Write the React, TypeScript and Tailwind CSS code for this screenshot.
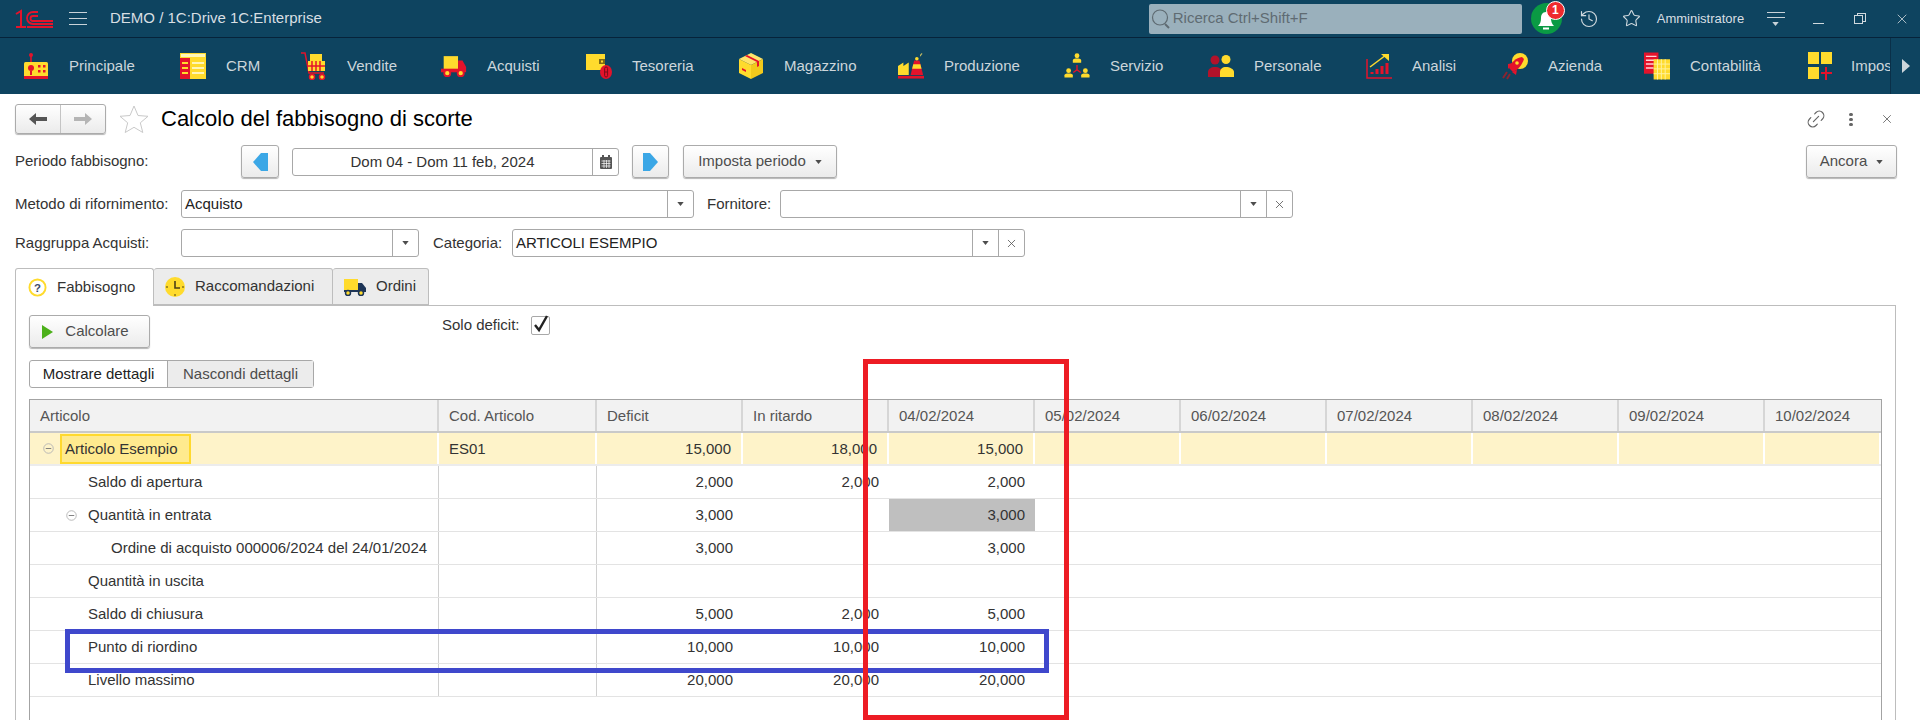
import type { ReactNode } from "react";
import { ChevronDown, History, Link2, Star, X } from "lucide-react";

const Y = "#ffdb2d";
const R = "#e4132b";

const IconPrincipale = () => (
  <svg viewBox="0 0 26 28" className="w-[26px] h-[28px]">
    <circle cx="8" cy="3" r="2" fill={R} />
    <rect x="7.2" y="4" width="1.6" height="7" fill={R} />
    <rect x="1" y="10" width="24" height="17" rx="1.5" fill={Y} />
    <rect x="1" y="24" width="24" height="3" fill={R} />
    <circle cx="8" cy="16" r="3" fill={R} />
    <rect x="7" y="19" width="2" height="4" fill={R} />
    <rect x="15" y="13" width="2.5" height="2.5" fill={R} />
    <rect x="20" y="13" width="2.5" height="2.5" fill={R} />
    <rect x="15" y="18" width="2.5" height="2.5" fill={R} />
    <rect x="20" y="18" width="2.5" height="2.5" fill={R} />
  </svg>
);

const IconCrm = () => (
  <svg viewBox="0 0 26 26" className="w-[26px] h-[26px]">
    <rect x="0" y="0" width="26" height="26" fill={Y} />
    <rect x="1" y="1" width="24" height="3" fill="#fff6b8" />
    <rect x="0" y="5" width="10" height="21" fill={R} />
    <rect x="2" y="9" width="6" height="2" fill={Y} />
    <rect x="2" y="14" width="6" height="2" fill={Y} />
    <rect x="2" y="19" width="6" height="2" fill={Y} />
    <rect x="12" y="9" width="12" height="2" fill="#fff6b8" />
    <rect x="12" y="14" width="12" height="2" fill="#fff6b8" />
    <rect x="12" y="19" width="12" height="2" fill="#fff6b8" />
  </svg>
);

const IconCart = () => (
  <svg viewBox="0 0 26 28" className="w-[26px] h-[28px]">
    <path d="M0 1h4l4 20h15" fill="none" stroke={R} strokeWidth="1.5" />
    <rect x="9" y="2" width="12" height="7" fill={Y} />
    <rect x="7" y="9" width="17" height="10" fill={Y} />
    <path d="M11 9v10M15 9v10M19 9v10M7 14h17" stroke={R} strokeWidth="1.5" />
    <circle cx="11" cy="25" r="2.5" fill={Y} stroke={R} strokeWidth="1.5" />
    <circle cx="21" cy="25" r="2.5" fill={Y} stroke={R} strokeWidth="1.5" />
  </svg>
);

const IconTruck = () => (
  <svg viewBox="0 0 29 24" className="w-[29px] h-[24px]">
    <rect x="3" y="1" width="16" height="15" fill={Y} />
    <path d="M19 6h5l4 7v6H19z" fill={R} />
    <rect x="0" y="15" width="20" height="4" fill={R} />
    <circle cx="7" cy="20" r="3.4" fill={Y} stroke={R} strokeWidth="2" />
    <circle cx="22" cy="20" r="3.4" fill={Y} stroke={R} strokeWidth="2" />
  </svg>
);

const IconWallet = () => (
  <svg viewBox="0 0 26 26" className="w-[26px] h-[26px]">
    <path d="M0 1h19v16H0z" fill={Y} />
    <rect x="13" y="6" width="6" height="5" fill="#7d6a14" />
    <rect x="15" y="7.5" width="2" height="2" fill={Y} />
    <ellipse cx="20" cy="19" rx="6" ry="7" fill={R} />
    <rect x="18.6" y="14" width="3" height="10" rx="1.5" fill="none" stroke="#7a0e1a" strokeWidth="1" />
    <path d="M18.6 19h3" stroke="#7a0e1a" />
  </svg>
);

const IconBox = () => (
  <svg viewBox="0 0 25 26" className="w-[25px] h-[26px]">
    <path d="M12 0l12 6-12 6L0 6z" fill="#ffe46b" />
    <path d="M0 6l12 6v14L0 20z" fill={Y} />
    <path d="M24 6v14l-12 6V12z" fill="#f2c91c" />
    <path d="M6 3l12 6v5l2-1V8L8 2z" fill={R} />
    <path d="M3 15l4 2v2l-4-2z" fill={R} />
  </svg>
);

const IconFactory = () => (
  <svg viewBox="0 0 29 28" className="w-[29px] h-[28px]">
    <path d="M0 14l6-4v4l6-4v14H0z" fill={Y} />
    <path d="M18 8h6l4 16H14z" fill={R} />
    <path d="M17 12h8l1.2 5H15.8z" fill={Y} />
    <circle cx="21" cy="6" r="2" fill={Y} />
    <path d="M25 3c0-1.500 1-2.500 2-3" stroke="#c7bd63" strokeWidth="1.200" fill="none" />
    <rect x="0" y="25" width="29" height="3" fill={R} />
  </svg>
);

const Person = ({ x, y, c = Y }: { x: number; y: number; c?: string }) => (
  <g fill={c}>
    <circle cx={x} cy={y} r="2.600" />
    <path d={`M${x - 4.500} ${y + 7.500}v-2.500c0-1.500 1.500-2 4.500-2s4.500.5 4.500 2v2.500z`} />
  </g>
);

const IconService = () => (
  <svg viewBox="0 0 28 28" className="w-[28px] h-[28px]">
    <Person x={14} y={3} />
    <Person x={5} y={19} />
    <Person x={23} y={19} />
    <path d="M14 13v5M14 18l-4 3M14 18l4 3" stroke={R} strokeWidth="1.500" fill="none" />
  </svg>
);

const IconPeople = () => (
  <svg viewBox="0 0 26 24" className="w-[26px] h-[24px]">
    <circle cx="7" cy="6" r="4.500" fill="#b3122a" />
    <path d="M0 23v-5c0-3 3-5 7-5s7 2 7 5v5z" fill="#b3122a" />
    <circle cx="18" cy="5.500" r="4.500" fill={Y} />
    <path d="M12 23v-5c0-3 2.500-5 6-5s8 2 8 5v5z" fill={Y} />
  </svg>
);

const IconChart = () => (
  <svg viewBox="0 0 26 28" className="w-[26px] h-[28px]">
    <path d="M1 7v19h25" fill="none" stroke={R} strokeWidth="1.500" />
    <path d="M6 22V20M11 22V17M16 22V14M21 22V11" stroke={R} strokeWidth="3" />
    <path d="M4 15L20 3" stroke={Y} strokeWidth="1.500" />
    <path d="M15 2h8v7z" fill={Y} />
  </svg>
);

const IconRocket = () => (
  <svg viewBox="0 0 26 28" className="w-[26px] h-[28px]">
    <circle cx="18" cy="9" r="8" fill={Y} />
    <path d="M20 5c-6 1-11 5-13 11l4 4c5-2 9-7 11-13z" fill={R} />
    <path d="M6 12l5-1-5 6zM15 18l-1 5-4-3z" fill={R} />
    <path d="M5 20l-4 6M8 22l-3 5" stroke="#8c2430" strokeWidth="2" />
    <circle cx="15" cy="11" r="1.800" fill={Y} />
  </svg>
);

const IconBooks = () => (
  <svg viewBox="0 0 27 28" className="w-[27px] h-[28px]">
    <rect x="0" y="0" width="15" height="22" fill={R} />
    <path d="M2 4h11M2 8h11M2 12h8M2 16h8" stroke="#ffd1d6" strokeWidth="1.500" />
    <rect x="10" y="7" width="17" height="21" fill={Y} />
    <path d="M14 7v21M18 7v21M22 7v21M10 12h17M10 17h17M10 22h17" stroke="#fff2a0" strokeWidth="1" />
  </svg>
);

const IconGrid = () => (
  <svg viewBox="0 0 24 28" className="w-[24px] h-[28px]">
    <rect x="0" y="0" width="11" height="12" fill={Y} />
    <rect x="13" y="0" width="11" height="12" fill={Y} />
    <rect x="0" y="15" width="11" height="12" fill={Y} />
    <path d="M18 15v13M13 21h11" stroke={R} strokeWidth="2" />
  </svg>
);

const navItems: { label: string; icon: ReactNode; w: string }[] = [
  { label: "Principale", icon: <IconPrincipale />, w: "w-[157px]" },
  { label: "CRM", icon: <IconCrm />, w: "w-[121px]" },
  { label: "Vendite", icon: <IconCart />, w: "w-[140px]" },
  { label: "Acquisti", icon: <IconTruck />, w: "w-[145px]" },
  { label: "Tesoreria", icon: <IconWallet />, w: "w-[152px]" },
  { label: "Magazzino", icon: <IconBox />, w: "w-[160px]" },
  { label: "Produzione", icon: <IconFactory />, w: "w-[166px]" },
  { label: "Servizio", icon: <IconService />, w: "w-[144px]" },
  { label: "Personale", icon: <IconPeople />, w: "w-[158px]" },
  { label: "Analisi", icon: <IconChart />, w: "w-[136px]" },
  { label: "Azienda", icon: <IconRocket />, w: "w-[142px]" },
  { label: "Contabilità", icon: <IconBooks />, w: "w-[164px]" },
];

const btn =
  "flex items-center justify-center rounded-[3px] border border-[#ababab] bg-linear-to-b from-white to-[#ebebeb] shadow-[0_1px_1px_#b5b5b5] text-[#4d4d4d]";

const Caret = () => (
  <svg viewBox="0 0 8 5" className="w-[7px] h-[4px]">
    <path d="M0 0h8L4 5z" fill="#4d4d4d" />
  </svg>
);

const FieldEnd = ({ children }: { children: ReactNode }) => (
  <div className="w-[26px] h-full flex items-center justify-center border-l border-[#a8a8a8]">{children}</div>
);

const Field = ({ value, w, clear }: { value?: string; w: string; clear?: boolean }) => (
  <div className={`${w} h-[28px] flex rounded-[3px] border border-[#a8a8a8] bg-white text-black`}>
    <div className="flex-1 pl-[3px] leading-[25px] truncate text-[#222]">{value}</div>
    <FieldEnd>
      <Caret />
    </FieldEnd>
    {clear && (
      <FieldEnd>
        <X className="w-[13px] h-[13px] text-[#555]" strokeWidth={1.5} />
      </FieldEnd>
    )}
  </div>
);

const Collapse = ({ className }: { className: string }) => (
  <svg viewBox="0 0 12 12" className={`w-[11px] h-[11px] shrink-0 ${className}`}>
    <circle cx="6" cy="6" r="5.200" fill="none" stroke="#b5b5b5" />
    <path d="M3 6h6" stroke="#777" />
  </svg>
);

const columns = [
  "Articolo",
  "Cod. Articolo",
  "Deficit",
  "In ritardo",
  "04/02/2024",
  "05/02/2024",
  "06/02/2024",
  "07/02/2024",
  "08/02/2024",
  "09/02/2024",
  "10/02/2024",
];

const rows: { label: string; pad: string; vals: string[]; collapse?: string }[] = [
  { label: "Saldo di apertura", pad: "pl-[58px]", vals: ["2,000", "2,000", "2,000"] },
  { label: "Quantità in entrata", pad: "pl-[58px]", vals: ["3,000", "", "3,000"], collapse: "left-[36px]" },
  { label: "Ordine di acquisto 000006/2024 del 24/01/2024", pad: "pl-[81px]", vals: ["3,000", "", "3,000"] },
  { label: "Quantità in uscita", pad: "pl-[58px]", vals: ["", "", ""] },
  { label: "Saldo di chiusura", pad: "pl-[58px]", vals: ["5,000", "2,000", "5,000"] },
  { label: "Punto di riordino", pad: "pl-[58px]", vals: ["10,000", "10,000", "10,000"] },
  { label: "Livello massimo", pad: "pl-[58px]", vals: ["20,000", "20,000", "20,000"] },
];

const gridCols =
  "grid grid-cols-[409px_158px_146px_146px_146px_146px_146px_146px_146px_146px_1fr]";

const App = () => {
  return (
    <div className="relative w-[1920px] h-[720px] overflow-hidden flex flex-col bg-white text-[15px] text-[#333] font-['Liberation_Sans',Arial,sans-serif]">
      {/* Top bar */}
      <div className="h-[38px] shrink-0 flex items-center bg-[#0e4460] border-b border-[#06233a] text-[#d8dfe3]">
        <svg viewBox="0 0 38 20" className="ml-[15px] w-[38px] h-[20px]">
          <path d="M1 5l5-3v16M1 18h10" fill="none" stroke="#e4132b" strokeWidth="2" />
          <path d="M23 3h-5a6 6 0 0 0 0 12h20M23 7h-5a2.500 2.500 0 0 0 0 5h20M12 18h26" fill="none" stroke="#e4132b" strokeWidth="1.800" />
        </svg>
        <div className="ml-[16px] w-[18px] flex flex-col gap-[5px]">
          <div className="h-px bg-[#c9d3d9]" />
          <div className="h-px bg-[#c9d3d9]" />
          <div className="h-px bg-[#c9d3d9]" />
        </div>
        <div className="ml-[23px] text-[15px]">DEMO / 1C:Drive 1C:Enterprise</div>
        <div className="ml-[827px] w-[373px] h-[30px] flex items-center gap-[2px] rounded-[2px] bg-[#9ab0bc] pl-[2px] text-[#5f6b72]">
          <svg viewBox="0 0 20 22" className="w-[20px] h-[22px]">
            <circle cx="9" cy="9.500" r="7.500" fill="none" stroke="#5f6b72" strokeWidth="1.200" />
            <path d="M14 16l4 4" stroke="#5f6b72" strokeWidth="2" />
          </svg>
          Ricerca Ctrl+Shift+F
        </div>
        <div className="relative ml-[9px] w-[31px] h-[31px] rounded-[50%] bg-[#0a9a44] flex items-center justify-center">
          <svg viewBox="0 0 18 20" className="w-[18px] h-[20px] mt-[4px]">
            <path d="M9 1c3.500 0 5 3 5 6 0 4 1 6 3 8H1c2-2 3-4 3-8 0-3 1.500-6 5-6z" fill="#fff" />
            <rect x="6" y="16.500" width="6" height="2" fill="#fff" />
          </svg>
          <div className="absolute -top-[2px] left-[15px] w-[19px] h-[19px] rounded-full bg-[#ee2a2e] border border-white text-white text-[12px] font-bold leading-[17px] text-center">1</div>
        </div>
        <History className="ml-[17px] w-[20px] h-[20px] text-[#d0d9de]" strokeWidth={1.4} />
        <Star className="ml-[23px] w-[19px] h-[19px] text-[#d0d9de]" strokeWidth={1.4} />
        <div className="ml-[16px] w-[110px] text-[13px]">Amministratore</div>
        <div className="w-[18px] flex flex-col items-center gap-[4px]">
          <div className="h-px w-full bg-[#c9d3d9]" />
          <div className="h-px w-full bg-[#c9d3d9]" />
          <svg viewBox="0 0 8 5" className="w-[7px] h-[4px]">
            <path d="M0 0h8L4 5z" fill="#c9d3d9" />
          </svg>
        </div>
        <div className="ml-[28px] w-[11px] h-px mt-[10px] bg-[#d0d9de]" />
        <div className="relative ml-[30px] w-[12px] h-[11px]">
          <div className="absolute left-[3px] top-0 w-[9px] h-[9px] border border-[#d0d9de]" />
          <div className="absolute left-0 top-[2px] w-[9px] h-[9px] border border-[#d0d9de] bg-[#0e4460]" />
        </div>
        <X className="ml-[28px] w-[16px] h-[16px] text-[#d0d9de]" strokeWidth={1.2} />
      </div>

      {/* Sections */}
      <div className="h-[56px] shrink-0 flex items-center bg-[#0e4460] text-[#ccd6db] text-[15px]">
        <div className="w-[1890px] h-full flex items-center pl-[23px] overflow-hidden">
          {navItems.map((item) => (
            <div key={item.label} className={`${item.w} shrink-0 flex items-center`}>
              <div className="w-[26px] flex justify-center">{item.icon}</div>
              <span className="ml-[20px]">{item.label}</span>
            </div>
          ))}
          <div className="shrink-0 flex items-center">
            <div className="w-[24px]">
              <IconGrid />
            </div>
            <span className="ml-[19px]">Imposta</span>
          </div>
        </div>
        <div className="w-[30px] h-full border-l border-[#0a3049] flex items-center justify-center">
          <svg viewBox="0 0 8 14" className="w-[8px] h-[14px]">
            <path d="M0 0l8 7-8 7z" fill="#cdd6db" />
          </svg>
        </div>
      </div>

      {/* Form */}
      <div className="flex-1 flex flex-col min-h-0">
        <div className="mt-[10px] h-[30px] flex items-center pl-[15px]">
          <div className={`${btn} w-[91px] h-[30px]`}>
            <div className="flex-1 h-full flex items-center justify-center border-r border-[#c4c4c4]">
              <svg viewBox="0 0 18 12" className="w-[18px] h-[12px]">
                <path d="M0 6l7-6v4h11v4H7v4z" fill="#555" />
              </svg>
            </div>
            <div className="flex-1 h-full flex items-center justify-center">
              <svg viewBox="0 0 18 12" className="w-[18px] h-[12px]">
                <path d="M18 6l-7-6v4H0v4h11v4z" fill="#b5b5b5" />
              </svg>
            </div>
          </div>
          <svg viewBox="0 0 30 28" className="ml-[13px] w-[30px] h-[28px]">
            <path d="M15 1l4 9.500 10 .8-7.700 6.500 2.500 9.700L15 22.300 6.200 27.500l2.500-9.700L1 11.300l10-.8z" fill="#fff" stroke="#c9c9c9" />
          </svg>
          <div className="ml-[12px] text-[22px] text-black leading-none">Calcolo del fabbisogno di scorte</div>
          <div className="ml-auto flex items-center pr-[26px]">
            <Link2 className="w-[22px] h-[22px] -rotate-45 text-[#666]" strokeWidth={1.3} />
            <div className="ml-[22px] flex flex-col gap-[2px]">
              <div className="w-[4px] h-[3px] rounded-full bg-[#666]" />
              <div className="w-[4px] h-[3px] rounded-full bg-[#666]" />
              <div className="w-[4px] h-[3px] rounded-full bg-[#666]" />
            </div>
            <X className="ml-[27px] w-[14px] h-[14px] text-[#666]" strokeWidth={1.5} />
          </div>
        </div>

        <div className="mt-[11px] h-[33px] flex items-center pl-[15px] pr-[23px]">
          <div className="w-[226px]">Periodo fabbisogno:</div>
          <div className={`${btn} w-[38px] h-[33px]`}>
            <svg viewBox="0 0 15 18" className="w-[15px] h-[18px]">
              <path d="M0 9l8-9h7v18H8z" fill="#3ba7e6" />
            </svg>
          </div>
          <div className="ml-[13px] w-[327px] h-[28px] flex rounded-[3px] border border-[#a8a8a8]">
            <div className="flex-1 text-center leading-[26px]">Dom 04 - Dom 11 feb, 2024</div>
            <div className="w-[26px] h-full flex items-center justify-center border-l border-[#a8a8a8]">
              <svg viewBox="0 0 12 14" className="w-[12px] h-[14px]">
                <rect x="0" y="2" width="12" height="12" rx="1" fill="#555" />
                <rect x="2" y="0" width="2" height="3" fill="#555" />
                <rect x="8" y="0" width="2" height="3" fill="#555" />
                <path d="M1.500 6h9M1.500 8.500h9M1.500 11h9M4 5v8M6.500 5v8M9 5v8" stroke="#fff" strokeWidth=".7" />
              </svg>
            </div>
          </div>
          <div className={`${btn} ml-[13px] w-[37px] h-[33px]`}>
            <svg viewBox="0 0 15 18" className="w-[15px] h-[18px]">
              <path d="M15 9L7 0H0v18h7z" fill="#3ba7e6" />
            </svg>
          </div>
          <div className={`${btn} ml-[14px] w-[154px] h-[33px] gap-[9px]`}>
            Imposta periodo
            <Caret />
          </div>
          <div className={`${btn} ml-auto w-[91px] h-[33px] gap-[9px]`}>
            Ancora
            <Caret />
          </div>
        </div>

        <div className="mt-[12px] h-[28px] flex items-center pl-[15px]">
          <div className="w-[166px]">Metodo di rifornimento:</div>
          <Field value="Acquisto" w="w-[513px]" />
          <div className="ml-[13px] w-[73px]">Fornitore:</div>
          <Field w="w-[513px]" clear />
        </div>

        <div className="mt-[11px] h-[28px] flex items-center pl-[15px]">
          <div className="w-[166px]">Raggruppa Acquisti:</div>
          <Field w="w-[238px]" />
          <div className="ml-[14px] w-[79px]">Categoria:</div>
          <Field value="ARTICOLI ESEMPIO" w="w-[513px]" clear />
        </div>

        {/* Tabs */}
        <div className="relative z-10 mt-[11px] -mb-px h-[38px] flex pl-[15px]">
          <div className="w-[139px] h-[38px] flex items-center pl-[12px] gap-[10px] bg-white border border-b-0 border-[#bdbdbd] rounded-t-[3px]">
            <svg viewBox="0 0 20 20" className="w-[19px] h-[19px]">
              <circle cx="10" cy="10" r="8.500" fill="#fff" stroke="#ffdb2d" strokeWidth="2" />
              <text x="10" y="14.500" textAnchor="middle" fontSize="12" fontWeight="700" fill="#3c4a66">?</text>
            </svg>
            Fabbisogno
          </div>
          <div className="w-[179px] h-[37px] flex items-center pl-[11px] gap-[10px] bg-[#ececec] border border-l-0 border-[#bdbdbd] rounded-t-[3px]">
            <svg viewBox="0 0 20 20" className="w-[20px] h-[20px]">
              <circle cx="10" cy="10" r="10" fill="#ffdb2d" />
              <path d="M10 4v7h5" fill="none" stroke="#4d4016" strokeWidth="1.600" />
              <path d="M1 10h2M17 10h2M10 17v2" stroke="#4d4016" />
            </svg>
            Raccomandazioni
          </div>
          <div className="w-[96px] h-[37px] flex items-center pl-[11px] gap-[10px] bg-[#ececec] border border-l-0 border-[#bdbdbd] rounded-t-[3px]">
            <svg viewBox="0 0 22 18" className="w-[22px] h-[18px]">
              <rect x="0" y="1" width="14" height="12" fill="#ffdb2d" />
              <path d="M14 5h4l4 5v4H14z" fill="#1d3557" />
              <rect x="0" y="12" width="22" height="2" fill="#1d3557" />
              <circle cx="4" cy="15" r="2.500" fill="#ffdb2d" stroke="#1d3557" strokeWidth="1.500" />
              <circle cx="17" cy="15" r="2.500" fill="#ffdb2d" stroke="#1d3557" strokeWidth="1.500" />
            </svg>
            Ordini
          </div>
        </div>

        <div className="ml-[15px] w-[1881px] flex-1 min-h-0 flex flex-col border border-b-0 border-[#bdbdbd] pl-[13px] pt-[9px]">
          <div className="h-[33px] shrink-0 flex items-start">
            <div className={`${btn} w-[121px] h-[33px] gap-[12px] pr-[8px]`}>
              <svg viewBox="0 0 11 14" className="w-[11px] h-[14px]">
                <path d="M0 0l11 7-11 7z" fill="#4cb01a" />
              </svg>
              Calcolare
            </div>
            <div className="ml-[292px] mt-[1px] w-[89px] leading-[18px]">Solo deficit:</div>
            <div className="mt-[1px] w-[19px] h-[19px] rounded-[2px] border border-[#a8a8a8] flex items-center justify-center">
              <svg viewBox="0 0 16 18" className="w-[16px] h-[18px] -mt-[3px]">
                <path d="M2 10l4 5L14 1" fill="none" stroke="#222" strokeWidth="2.400" />
              </svg>
            </div>
          </div>

          <div className="mt-[12px] w-[285px] h-[28px] shrink-0 flex rounded-[3px] border border-[#a8a8a8]">
            <div className="w-[138px] flex items-center justify-center text-[#222] border-r border-[#a8a8a8]">Mostrare dettagli</div>
            <div className="flex-1 flex items-center justify-center bg-[#ececec] text-[#4d4d4d]">Nascondi dettagli</div>
          </div>

          {/* Grid */}
          <div className="mt-[11px] w-[1853px] flex-1 border border-b-0 border-[#a3a3a3]">
            <div className={`${gridCols} h-[33px] bg-[#f2f2f2] border-b-2 border-[#c9c9c9] text-[#555]`}>
              {columns.map((c) => (
                <div key={c} className="pl-[10px] leading-[31px] border-r-2 border-[#d6d6d6] last:border-r-0 truncate">
                  {c}
                </div>
              ))}
            </div>

            <div className={`${gridCols} h-[33px] bg-[#fef3c9] border-b-2 border-[#ececec]`}>
              <div className="relative border-r-2 border-white">
                <Collapse className="absolute left-[13px] top-[10px]" />
                <div className="absolute left-[30px] top-[1px] h-[30px] w-[131px] border-2 border-[#ffd92e] bg-[#ffea8e] pl-[3px] leading-[26px] text-[#333]">
                  Articolo Esempio
                </div>
              </div>
              <div className="pl-[10px] leading-[31px] border-r-2 border-white">ES01</div>
              <div className="pr-[10px] leading-[31px] text-right border-r-2 border-white">15,000</div>
              <div className="pr-[10px] leading-[31px] text-right border-r-2 border-white">18,000</div>
              <div className="pr-[10px] leading-[31px] text-right border-r-2 border-white">15,000</div>
              {[0, 1, 2, 3, 4, 5, 6].map((i) => (
                <div key={i} className="border-r-2 border-white last:border-r-0" />
              ))}
            </div>

            {rows.map((row) => (
              <div key={row.label} className={`${gridCols} h-[33px] border-b border-[#e3e3e3]`}>
                <div className={`relative ${row.pad} pr-[10px] leading-[32px] border-r border-[#d0d0d0] truncate`}>
                  {row.label === "Quantità in entrata" && <Collapse className="absolute left-[36px] top-[11px]" />}
                  {row.label}
                </div>
                <div className="border-r border-[#d0d0d0]" />
                <div className="pr-[10px] leading-[32px] text-right">{row.vals[0]}</div>
                <div className="pr-[10px] leading-[32px] text-right">{row.vals[1]}</div>
                <div className={`pr-[10px] leading-[32px] text-right ${row.label === "Quantità in entrata" ? "bg-[#bfbfbf]" : ""}`}>
                  {row.vals[2]}
                </div>
              </div>
            ))}
          </div>
        </div>
      </div>

      {/* Annotations drawn over the screenshot */}
      <div className="absolute left-[65px] top-[629px] w-[984px] h-[44px] border-[5px] border-[#3f48cc]" />
      <div className="absolute left-[863px] top-[359px] w-[206px] h-[361px] border-[5px] border-[#ed1c24]" />
    </div>
  );
};

export default App;
